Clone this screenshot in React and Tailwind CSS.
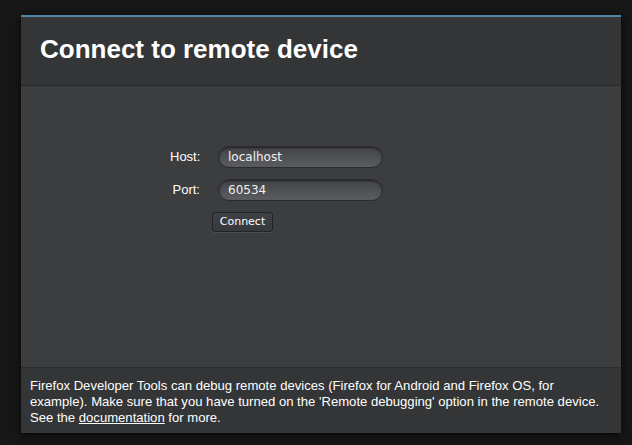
export default function App() {
  return (
    <div className="w-[632px] h-[445px] bg-[#171717] pt-[15px] pl-[21px] font-['Liberation_Sans',Arial,sans-serif]">
      <div className="w-[600px] h-[418px] flex flex-col border-t-2 border-[#4f86a8] shadow-[0_2px_8px_rgba(0,0,0,0.8)]">
        <div className="h-[69px] bg-[#343537] border-b border-[#2a2b2d] flex items-center pl-[19px]">
          <h1 className="text-[26px] font-bold text-white pb-[3px]">Connect to remote device</h1>
        </div>

        <div className="flex-1 bg-[#3c3d3f] pt-[60px] pl-[149px]">
          {[
            { label: 'Host:', value: 'localhost' },
            { label: 'Port:', value: '60534' },
          ].map(f => (
            <div key={f.label} className="flex items-center mb-[11px] h-[22px]">
              <span className="w-[30px] text-right text-[13px] text-white">{f.label}</span>
              <div className="ml-[18px] w-[165px] h-[22px] rounded-full bg-gradient-to-b from-[#424346] to-[#5b5d61] border border-[#2b2c2e] shadow-[inset_0_1px_2px_rgba(0,0,0,0.5)] flex items-center pl-[9px] text-[12px] text-[#f0f0f0] font-['DejaVu_Sans',sans-serif]">
                {f.value}
              </div>
            </div>
          ))}
          <button className="block ml-[42px] w-[61px] h-[20px] rounded-[3px] bg-gradient-to-b from-[#404144] to-[#37383b] border border-[#222325] shadow-[0_1px_0_rgba(255,255,255,0.08)] text-[11px] text-white font-['DejaVu_Sans',sans-serif]">
            Connect
          </button>
        </div>

        <div className="h-[66px] bg-[#343537] border-t border-[#2c2d2f] pl-[9px] pt-[10px]">
          <p className="w-[576px] text-[13.1px] leading-[16px] text-white">
            Firefox Developer Tools can debug remote devices (Firefox for Android and Firefox OS, for example). Make sure that you have turned on the 'Remote debugging' option in the remote device. See the <span className="underline">documentation</span> for more.
          </p>
        </div>
      </div>
    </div>
  )
}
